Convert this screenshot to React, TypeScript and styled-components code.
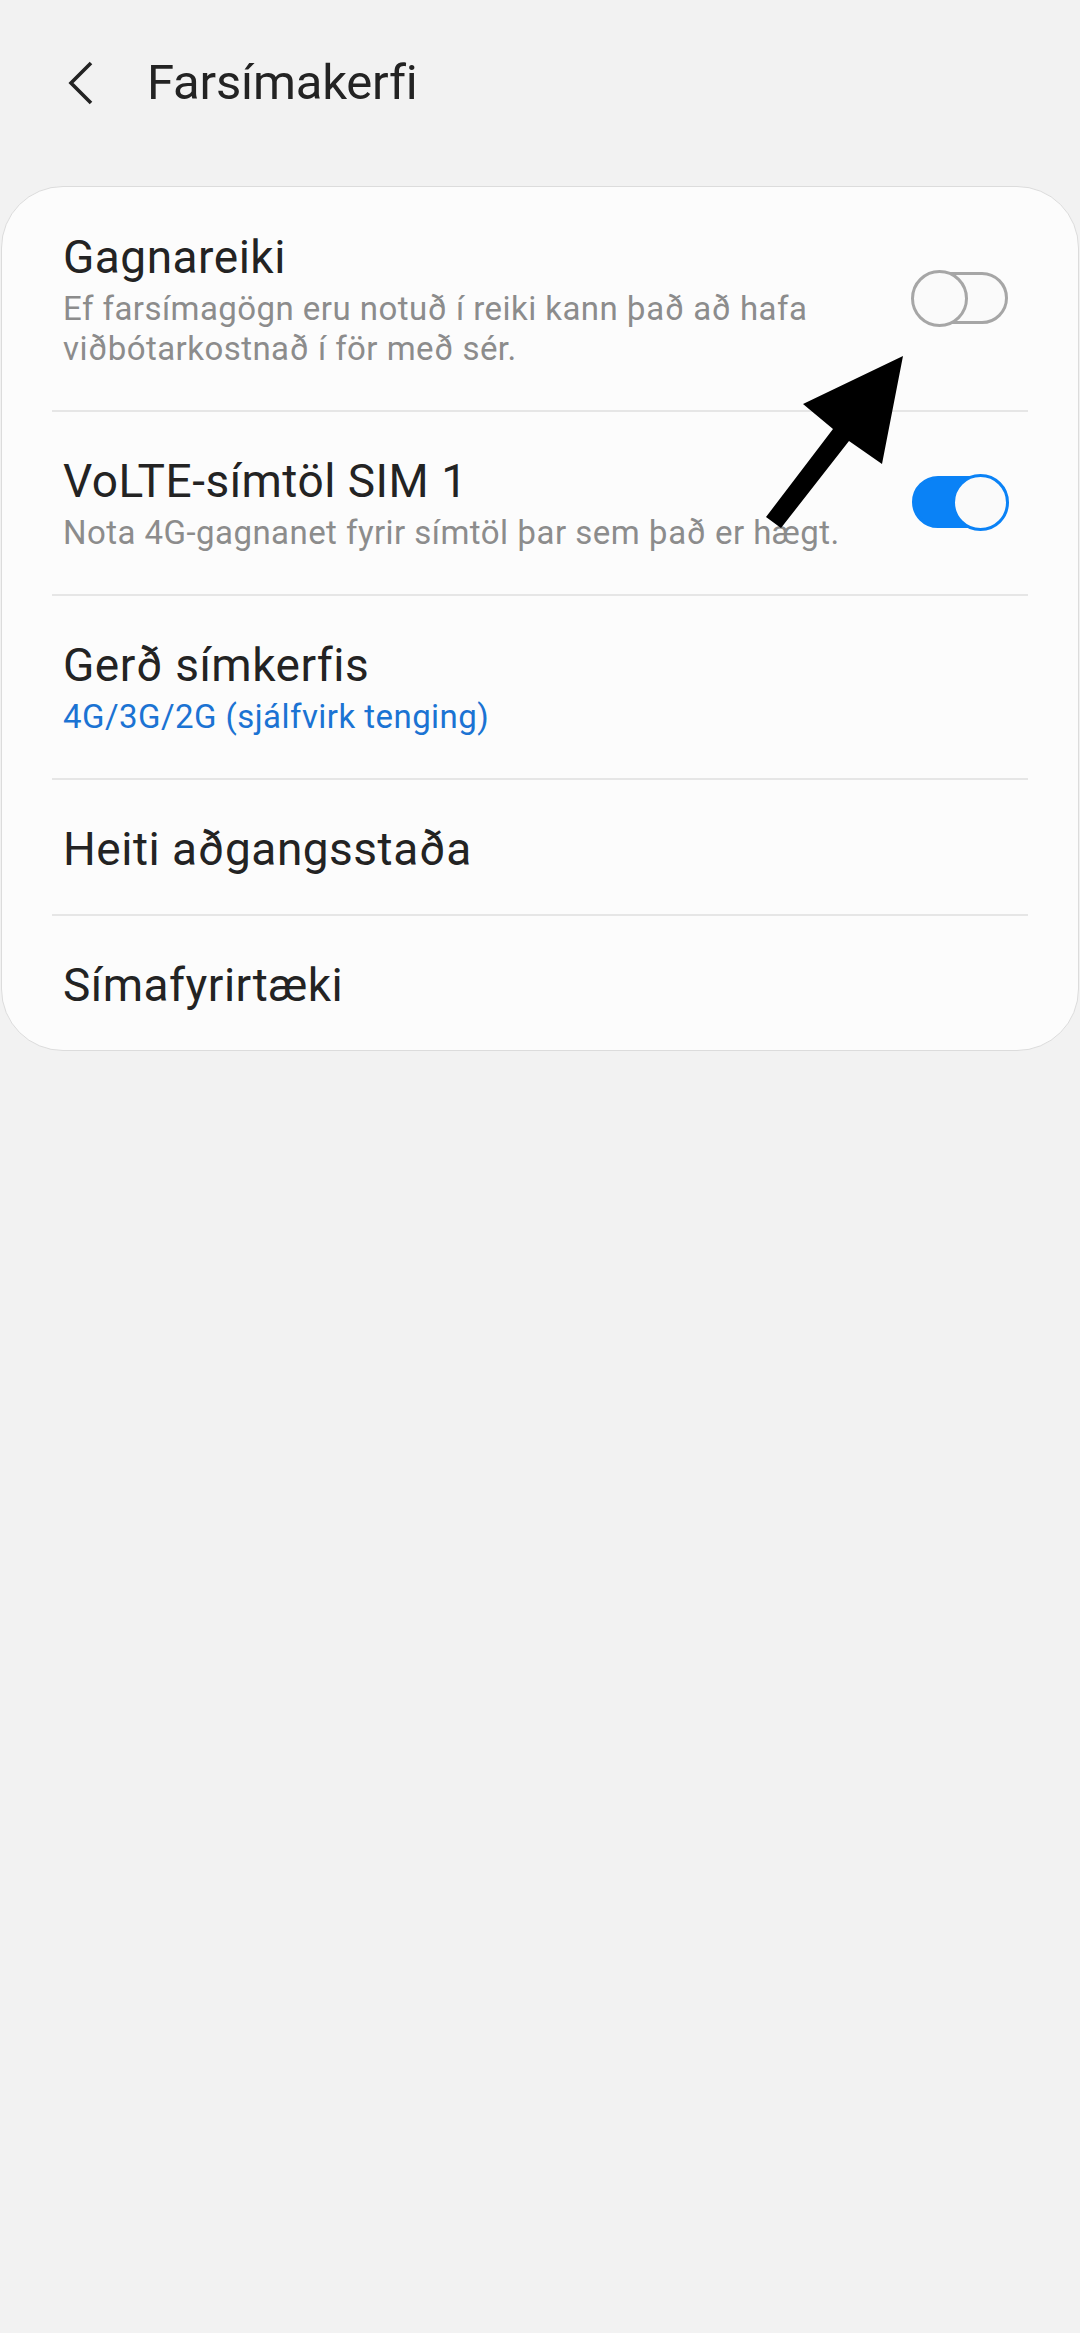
import React from "react";
import styled, { createGlobalStyle } from "styled-components";

const GlobalStyle = createGlobalStyle`
  html, body {
    margin: 0;
    padding: 0;
    background: #f2f2f2;
  }
  body {
    font-family: Roboto, "Noto Sans", "Liberation Sans", sans-serif;
    -webkit-font-smoothing: antialiased;
  }
`;

const Page = styled.div`
  position: relative;
  width: 1080px;
  min-height: 2333px;
  background: #f2f2f2;
`;

const Header = styled.header`
  display: flex;
  align-items: flex-start;
  height: 186px;
  padding: 54px 0 0 66px;
  box-sizing: border-box;
`;

const BackButton = styled.button`
  display: flex;
  align-items: center;
  justify-content: center;
  width: 30px;
  height: 46px;
  padding: 0;
  margin: 6px 51px 0 0;
  border: none;
  background: transparent;
`;

const Title = styled.h1`
  margin: 0;
  font-size: 49px;
  line-height: 58px;
  font-weight: 400;
  color: #232323;
  letter-spacing: -0.2px;
`;

const Card = styled.section`
  margin: 0 1px;
  background: #fcfcfc;
  border: 1px solid #dcdcdc;
  border-radius: 62px;
  overflow: hidden;
`;

const Row = styled.div<{ $first?: boolean }>`
  display: flex;
  align-items: center;
  margin: 0 50px;
  padding: ${(p) => (p.$first ? "41px" : "40px")} 20px 36px 11px;
  border-top: ${(p) => (p.$first ? "none" : "2px solid #e6e6e6")};
`;

const TextBlock = styled.div`
  flex: 1;
  min-width: 0;
`;

const ItemTitle = styled.div`
  font-size: 46px;
  line-height: 58px;
  letter-spacing: 0.5px;
  color: #232323;
`;

const ItemSub = styled.div<{ $accent?: boolean }>`
  margin: 3px 0 5px;
  font-size: 33px;
  line-height: 40px;
  letter-spacing: 0.45px;
  color: ${(p) => (p.$accent ? "#1b73d3" : "#8c8c8c")};
  padding-right: 30px;
`;

const Track = styled.div<{ $on: boolean }>`
  position: relative;
  flex: none;
  width: 96px;
  height: 52px;
  box-sizing: border-box;
  border-radius: 26px;
  border: 3px solid ${(p) => (p.$on ? "#0a82f6" : "#a6a6a6")};
  background: ${(p) => (p.$on ? "#0a82f6" : "#fafafa")};
  margin: 0 0 6px 20px;
`;

const Thumb = styled.div<{ $on: boolean }>`
  position: absolute;
  top: 50%;
  ${(p) => (p.$on ? "right: -4px;" : "left: -4px;")}
  width: 57px;
  height: 57px;
  margin-top: -28.5px;
  box-sizing: border-box;
  border-radius: 50%;
  background: #fafafa;
  border: 3px solid ${(p) => (p.$on ? "#0a82f6" : "#a6a6a6")};
`;

const ArrowOverlay = styled.svg`
  position: absolute;
  left: 760px;
  top: 340px;
  pointer-events: none;
`;

function Toggle({ on }: { on: boolean }) {
  return (
    <Track $on={on}>
      <Thumb $on={on} />
    </Track>
  );
}

type Item = { title: string; sub?: string; accent?: boolean; toggle?: boolean };

const items: Item[] = [
  {
    title: "Gagnareiki",
    sub: "Ef farsímagögn eru notuð í reiki kann það að hafa viðbótarkostnað í för með sér.",
    toggle: false,
  },
  {
    title: "VoLTE-símtöl SIM 1",
    sub: "Nota 4G-gagnanet fyrir símtöl þar sem það er hægt.",
    toggle: true,
  },
  { title: "Gerð símkerfis", sub: "4G/3G/2G (sjálfvirk tenging)", accent: true },
  { title: "Heiti aðgangsstaða" },
  { title: "Símafyrirtæki" },
];

export default function App() {
  return (
    <Page>
      <GlobalStyle />
      <Header>
        <BackButton aria-label="Til baka">
          <svg width="30" height="46" viewBox="0 0 30 46">
            <path d="M25 3 L5 23 L25 43" fill="none" stroke="#232323" strokeWidth="3.6" strokeLinecap="butt" strokeLinejoin="miter" />
          </svg>
        </BackButton>
        <Title>Farsímakerfi</Title>
      </Header>
      <Card>
        {items.map((it, i) => (
          <Row key={it.title} $first={i === 0}>
            <TextBlock>
              <ItemTitle>{it.title}</ItemTitle>
              {it.sub && <ItemSub $accent={it.accent}>{it.sub}</ItemSub>}
            </TextBlock>
            {it.toggle !== undefined && <Toggle on={it.toggle} />}
          </Row>
        ))}
      </Card>
      <ArrowOverlay width="160" height="200" viewBox="760 340 160 200">
        <polygon
          points="903,356 882,464 849,441 781,528 766,517 833,429 803,404"
          fill="#000"
        />
      </ArrowOverlay>
    </Page>
  );
}
